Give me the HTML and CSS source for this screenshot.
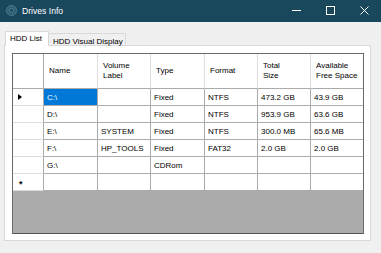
FILE: index.html
```html
<!DOCTYPE html>
<html lang="en">
<head>
    <meta charset="UTF-8">
    <title>Drives Info</title>
    <link rel="stylesheet" href="styles.css">
</head>
<body>
    <div class="window">
        <div class="titlebar">
            <svg class="app-icon" width="11" height="11" viewBox="0 0 11 11">
                <circle cx="5.5" cy="5.5" r="5" fill="#2b5d73" stroke="#4d7c90" stroke-width="1"/>
                <circle cx="5.5" cy="5.5" r="2.2" fill="#1d4b60" stroke="#5a8799" stroke-width="0.8"/>
            </svg>
            <span class="title">Drives Info</span>
            <div class="controls">
                <span class="ctl">
                    <svg width="9" height="9" viewBox="0 0 9 9"><path d="M0 4.5H9" stroke="#fff" stroke-width="1"/></svg>
                </span>
                <span class="ctl">
                    <svg width="9" height="9" viewBox="0 0 9 9"><rect x="0.5" y="0.5" width="8" height="8" fill="none" stroke="#fff" stroke-width="1"/></svg>
                </span>
                <span class="ctl">
                    <svg width="9" height="9" viewBox="0 0 9 9"><path d="M0.5 0.5L8.5 8.5M8.5 0.5L0.5 8.5" stroke="#fff" stroke-width="1"/></svg>
                </span>
            </div>
        </div>

        <div class="client">
            <div class="tabs">
                <div class="tab selected">HDD List</div>
                <div class="tab">HDD Visual Display</div>
            </div>

            <div class="panel">
                <div class="grid">
                    <div class="row head">
                        <div class="cell rh"></div>
                        <div class="cell">Name</div>
                        <div class="cell">Volume<br>Label</div>
                        <div class="cell">Type</div>
                        <div class="cell">Format</div>
                        <div class="cell">Total<br>Size</div>
                        <div class="cell">Available<br>Free Space</div>
                    </div>
                    <div class="row">
                        <div class="cell rh"><span class="arrow"></span></div>
                        <div class="cell sel">C:\</div>
                        <div class="cell"></div>
                        <div class="cell">Fixed</div>
                        <div class="cell">NTFS</div>
                        <div class="cell">473.2 GB</div>
                        <div class="cell">43.9 GB</div>
                    </div>
                    <div class="row">
                        <div class="cell rh"></div>
                        <div class="cell">D:\</div>
                        <div class="cell"></div>
                        <div class="cell">Fixed</div>
                        <div class="cell">NTFS</div>
                        <div class="cell">953.9 GB</div>
                        <div class="cell">63.6 GB</div>
                    </div>
                    <div class="row">
                        <div class="cell rh"></div>
                        <div class="cell">E:\</div>
                        <div class="cell">SYSTEM</div>
                        <div class="cell">Fixed</div>
                        <div class="cell">NTFS</div>
                        <div class="cell">300.0 MB</div>
                        <div class="cell">65.6 MB</div>
                    </div>
                    <div class="row">
                        <div class="cell rh"></div>
                        <div class="cell">F:\</div>
                        <div class="cell">HP_TOOLS</div>
                        <div class="cell">Fixed</div>
                        <div class="cell">FAT32</div>
                        <div class="cell">2.0 GB</div>
                        <div class="cell">2.0 GB</div>
                    </div>
                    <div class="row">
                        <div class="cell rh"></div>
                        <div class="cell">G:\</div>
                        <div class="cell"></div>
                        <div class="cell">CDRom</div>
                        <div class="cell"></div>
                        <div class="cell"></div>
                        <div class="cell"></div>
                    </div>
                    <div class="row">
                        <div class="cell rh"><span class="star">*</span></div>
                        <div class="cell"></div>
                        <div class="cell"></div>
                        <div class="cell"></div>
                        <div class="cell"></div>
                        <div class="cell"></div>
                        <div class="cell"></div>
                    </div>
                </div>
            </div>
        </div>
    </div>
</body>
</html>
```

FILE: styles.css
```css
* {
    box-sizing: border-box;
}
body {
    margin: 0;
    font-family: "Liberation Sans", Arial, sans-serif;
    background-color: #f0f0f0;
}
.window {
    width: 381px;
    height: 253px;
    background-color: #f0f0f0;
    overflow: hidden;
}
.titlebar {
    height: 22px;
    background-color: #19475c;
    display: flex;
    align-items: center;
    color: #fff;
}
.app-icon {
    margin-left: 6px;
    margin-top: -2px;
}
.title {
    margin-left: 5px;
    font-size: 8.6px;
    margin-top: -1px;
}
.controls {
    margin-left: auto;
    display: flex;
    height: 100%;
}
.ctl {
    width: 34px;
    display: flex;
    align-items: center;
    justify-content: center;
    margin-top: -1px;
}
.client {
    padding: 9px 0 0 4px;
}
.tabs {
    display: flex;
    align-items: flex-end;
    padding-left: 1px;
    height: 14px;
}
.tab {
    font-size: 8px;
    border: 1px solid #d9d9d9;
    border-bottom: none;
    padding: 3px 0 0 4px;
    height: 12px;
    white-space: nowrap;
    background-color: #f0f0f0;
}
.tab.selected {
    width: 44px;
    height: 15px;
    margin-bottom: -1px;
    padding-top: 2px;
    background-color: #fff;
    position: relative;
    z-index: 1;
}
.tab:not(.selected) {
    width: 77px;
    border-left: none;
}
.panel {
    width: 367px;
    height: 196px;
    background-color: #fff;
    border: 1px solid #d9d9d9;
    padding: 7px 6px 6px 7px;
}
.grid {
    width: 352px;
    height: 181px;
    border: 1px solid #6a6a6a;
    border-bottom-color: #555;
    background-color: #ababab;
    font-size: 8px;
    color: #000;
}
.row {
    display: grid;
    grid-template-columns: 31px 54px 53px 54px 53px 53px 52px;
    height: 17px;
    background-color: #fff;
}
.row.head {
    height: 35px;
}
.cell {
    border-right: 1px solid #ababab;
    border-bottom: 1px solid #ababab;
    padding-left: 3px;
    display: flex;
    align-items: center;
    white-space: nowrap;
    overflow: hidden;
}
.cell:last-child {
    border-right: none;
}
.head .cell {
    padding-left: 5px;
    line-height: 10px;
    border-right-color: #dedede;
    border-bottom-color: #ababab;
}
.head .cell.rh {
    border-right-color: #ababab;
}
.rh {
    border-bottom-color: #dcdcdc;
    justify-content: flex-start;
}
.sel {
    background-color: #0078d7;
    color: #fff;
}
.arrow {
    width: 0;
    height: 0;
    margin-left: 2px;
    border-left: 4px solid #000;
    border-top: 3.5px solid transparent;
    border-bottom: 3.5px solid transparent;
}
.star {
    margin-left: 3px;
    font-size: 9px;
    font-weight: bold;
    margin-top: 3px;
}
```
